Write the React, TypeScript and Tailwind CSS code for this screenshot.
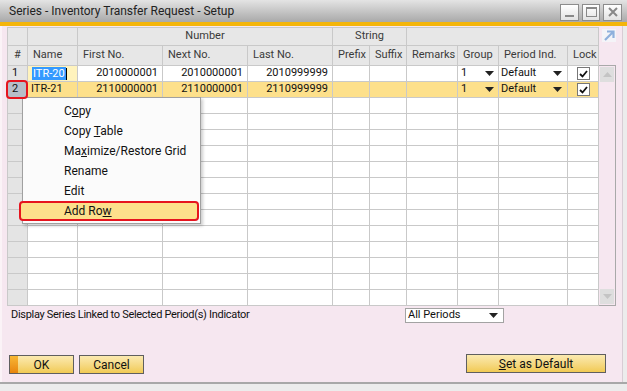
import React from 'react'

const font = { fontFamily: 'Roboto, "Liberation Sans", sans-serif' }

// grid column template: cell widths between 1px grid lines
const gridCols = 'grid-cols-[19px_49px_84px_84px_84px_36px_36px_50px_40px_68px_30px]'

function Arrow({ className = '' }: { className?: string }) {
  return (
    <svg width="9" height="5" viewBox="0 0 9 5" className={className} aria-hidden="true">
      <path d="M0 0h9L4.5 5z" fill="#222" />
    </svg>
  )
}

function Check() {
  return (
    <div className="w-[13px] h-[13px] border border-[#777] bg-white flex items-center justify-center">
      <svg width="9" height="8" viewBox="0 0 9 8" aria-hidden="true">
        <path d="M1 4l2.5 2.5L8 1" stroke="#111" strokeWidth="1.8" fill="none" />
      </svg>
    </div>
  )
}

function TitleBar() {
  return (
    <div className="h-[22px] bg-gradient-to-b from-[#e4e4e4] to-[#a9a9a9] flex items-center justify-between pl-[9px] pr-[5px]">
      <span className="text-[12px] text-[#222]" style={font}>Series - Inventory Transfer Request - Setup</span>
      <div className="flex gap-[3px] pt-[2px]">
        <div className="w-[19px] h-[17px] border border-[#8c8c8c] bg-gradient-to-b from-white to-[#e2e2e2] flex items-end justify-center pb-[3px]">
          <div className="w-[9px] h-[2px] bg-[#888]" />
        </div>
        <div className="w-[18px] h-[17px] border border-[#8c8c8c] bg-gradient-to-b from-white to-[#e2e2e2] flex items-center justify-center">
          <div className="w-[11px] h-[10px] border border-[#888] border-t-2" />
        </div>
        <div className="w-[19px] h-[17px] border border-[#8c8c8c] bg-gradient-to-b from-white to-[#e2e2e2] flex items-center justify-center">
          <svg width="10" height="10" viewBox="0 0 10 10" aria-hidden="true">
            <path d="M1 1l8 8M9 1L1 9" stroke="#888" strokeWidth="2" />
          </svg>
        </div>
      </div>
    </div>
  )
}

function Grid() {
  const hdr = 'bg-[#e7e7e7] text-[#3a3a3a] flex items-center px-[5px]'
  const empty = Array.from({ length: 13 })
  return (
    <div className={`grid ${gridCols} gap-px bg-[#c9c9c9] p-px w-[592px] text-[11px]`} style={font}>
      {/* group header row */}
      <div className={`${hdr} h-[17px]`} />
      <div className={`${hdr} h-[17px]`} />
      <div className={`${hdr} h-[17px] col-span-3 justify-center`}>Number</div>
      <div className={`${hdr} h-[17px] col-span-2 justify-center`}>String</div>
      <div className={`${hdr} h-[17px] col-span-4`} />
      {/* column header row */}
      <div className={`${hdr} h-[19px] px-[6px]`}>#</div>
      <div className={`${hdr} h-[19px]`}>Name</div>
      <div className={`${hdr} h-[19px]`}>First No.</div>
      <div className={`${hdr} h-[19px]`}>Next No.</div>
      <div className={`${hdr} h-[19px]`}>Last No.</div>
      <div className={`${hdr} h-[19px]`}>Prefix</div>
      <div className={`${hdr} h-[19px]`}>Suffix</div>
      <div className={`${hdr} h-[19px]`}>Remarks</div>
      <div className={`${hdr} h-[19px]`}>Group</div>
      <div className={`${hdr} h-[19px]`}>Period Ind.</div>
      <div className={`${hdr} h-[19px] px-[4px]`}>Lock</div>

      {/* row 1 */}
      <div className="bg-[#e4e4e4] h-[15px] flex items-center px-[4px] text-[#111]">1</div>
      <div className="bg-[#fff3bd] h-[15px] flex items-center px-[4px]">
        <span className="bg-[#3399ff] text-white px-[1px] leading-[13px]">ITR-20</span>
        <span className="w-px h-[12px] bg-black" />
      </div>
      <div className="bg-white h-[15px] flex items-center justify-end px-[4px] text-[#111]">2010000001</div>
      <div className="bg-white h-[15px] flex items-center justify-end px-[4px] text-[#111]">2010000001</div>
      <div className="bg-white h-[15px] flex items-center justify-end px-[4px] text-[#111]">2010999999</div>
      <div className="bg-white h-[15px]" />
      <div className="bg-white h-[15px]" />
      <div className="bg-white h-[15px]" />
      <div className="bg-white h-[15px] flex items-center justify-between pl-[3px] pr-[4px] text-[#111]">1<Arrow /></div>
      <div className="bg-white h-[15px] flex items-center justify-between pl-[2px] pr-[5px] text-[#111]">Default<Arrow /></div>
      <div className="bg-white h-[15px] flex items-center justify-center"><Check /></div>

      {/* row 2 */}
      <div className="bg-[#b7bec8] h-[15px] flex items-center px-[4px] text-[#111]">2</div>
      <div className="bg-[#fde08b] h-[15px] flex items-center px-[3px] text-[#111]">ITR-21</div>
      <div className="bg-[#fde08b] h-[15px] flex items-center justify-end px-[4px] text-[#111]">2110000001</div>
      <div className="bg-[#fde08b] h-[15px] flex items-center justify-end px-[4px] text-[#111]">2110000001</div>
      <div className="bg-[#fde08b] h-[15px] flex items-center justify-end px-[4px] text-[#111]">2110999999</div>
      <div className="bg-[#fde08b] h-[15px]" />
      <div className="bg-[#fde08b] h-[15px]" />
      <div className="bg-[#fde08b] h-[15px]" />
      <div className="bg-[#fde08b] h-[15px] flex items-center justify-between pl-[3px] pr-[4px] text-[#111]">1<Arrow /></div>
      <div className="bg-[#fde08b] h-[15px] flex items-center justify-between pl-[2px] pr-[5px] text-[#111]">Default<Arrow /></div>
      <div className="bg-[#fde08b] h-[15px] flex items-center justify-center"><Check /></div>

      {empty.map((_, i) => (
        <React.Fragment key={i}>
          <div className="bg-[#e4e4e4] h-[15px]" />
          {Array.from({ length: 10 }).map((__, j) => (
            <div key={j} className="bg-white h-[15px]" />
          ))}
        </React.Fragment>
      ))}
    </div>
  )
}

function ScrollColumn() {
  return (
    <div className="w-[17px] flex flex-col">
      <div className="h-[15px] mt-px ml-[2px] flex items-center justify-center">
        <svg width="14" height="13" viewBox="0 0 14 13" aria-hidden="true">
          <rect x="0" y="0" width="14" height="13" fill="#f4f4f8" />
          <path d="M3 11L11 3M5 2.5h6.5V9" stroke="#8fb0dc" strokeWidth="2.2" fill="none" />
        </svg>
      </div>
      <div className="mt-[22px] h-[241px] border border-l-0 border-[#a9a9a9] flex flex-col justify-between p-px">
        <div className="h-[15px] bg-[#dedede] flex items-center justify-center">
          <svg width="9" height="5" viewBox="0 0 9 5" aria-hidden="true"><path d="M0 5h9L4.5 0z" fill="#c4c4c4" /></svg>
        </div>
        <div className="h-[15px] bg-[#dedede] flex items-center justify-center">
          <svg width="9" height="5" viewBox="0 0 9 5" aria-hidden="true"><path d="M0 0h9L4.5 5z" fill="#c4c4c4" /></svg>
        </div>
      </div>
    </div>
  )
}

function ContextMenu() {
  const item = 'h-[20px] flex items-center pl-[41px] text-[12px] text-[#111]'
  return (
    <div className="absolute left-[22px] top-[97px] w-[179px] bg-[#fbfbfb] border border-[#a0a0a0] shadow-[2px_2px_3px_rgba(0,0,0,0.2)] pt-[3px] pb-[2px]" style={font}>
      <div className={item}><span>C<u>o</u>py</span></div>
      <div className={item}><span>Copy <u>T</u>able</span></div>
      <div className={item}><span>Ma<u>x</u>imize/Restore Grid</span></div>
      <div className={item}><span>Rename</span></div>
      <div className={item}><span>Edit</span></div>
      <div className={`${item} bg-[#fde08b] -ml-[4px] pl-[43px] mr-px border-2 border-[#e6141e] rounded-[4px] h-[19px]`}><span>Add Ro<u>w</u></span></div>
    </div>
  )
}

function YellowButton({ children, w, accent }: { children: React.ReactNode; w: string; accent?: boolean }) {
  return (
    <div className={`${w} h-[19px] border border-[#5f5f5f] bg-gradient-to-b from-[#fbeab0] to-[#f1ca52] flex items-center justify-center relative text-[12px] text-[#111]`} style={font}>
      {accent && <div className="absolute left-0 top-0 bottom-0 w-[8px] bg-gradient-to-b from-[#f7b733] to-[#e8850a]" />}
      <span className="relative">{children}</span>
    </div>
  )
}

export default function App() {
  return (
    <div className="w-[627px] h-[391px] bg-[#ececec] overflow-hidden relative">
      <TitleBar />
      <div className="h-[4px] bg-[#f4b50a]" />
      <div className="w-[623px] h-[356px] bg-[#f6e7f0] border-l-2 border-[#fbf3f7] border-r border-r-[#d8ccd4] flex flex-col">
        <div className="flex pl-[5px] pt-px">
          <Grid />
          <ScrollColumn />
        </div>
        <div className="flex items-start pl-[9px] pt-[2px] h-[48px]">
          <span className="text-[11px] tracking-[-0.3px] text-[#111] w-[394px] leading-[14px]" style={font}>Display Series Linked to Selected Period(s) Indicator</span>
          <div className="w-[99px] h-[15px] bg-white border border-[#a3a3a3] flex items-center justify-between pl-[2px] pr-[5px] text-[11px] text-[#111]" style={font}>
            All Periods<Arrow />
          </div>
        </div>
        <div className="flex items-start justify-between pl-[7px] pr-[16px]">
          <div className="flex gap-[5px] mt-px">
            <YellowButton w="w-[65px]" accent>OK</YellowButton>
            <YellowButton w="w-[65px]">Cancel</YellowButton>
          </div>
          <YellowButton w="w-[140px]"><u>S</u>et as Default</YellowButton>
        </div>
      </div>
      <div className="h-[2px] bg-[#a8a8a8]" />
      <ContextMenu />
      {/* red marker around selected row header */}
      <div className="absolute left-[6px] top-[80px] w-[22px] h-[19px] border-2 border-[#e6141e] rounded-[4px]" />
    </div>
  )
}
